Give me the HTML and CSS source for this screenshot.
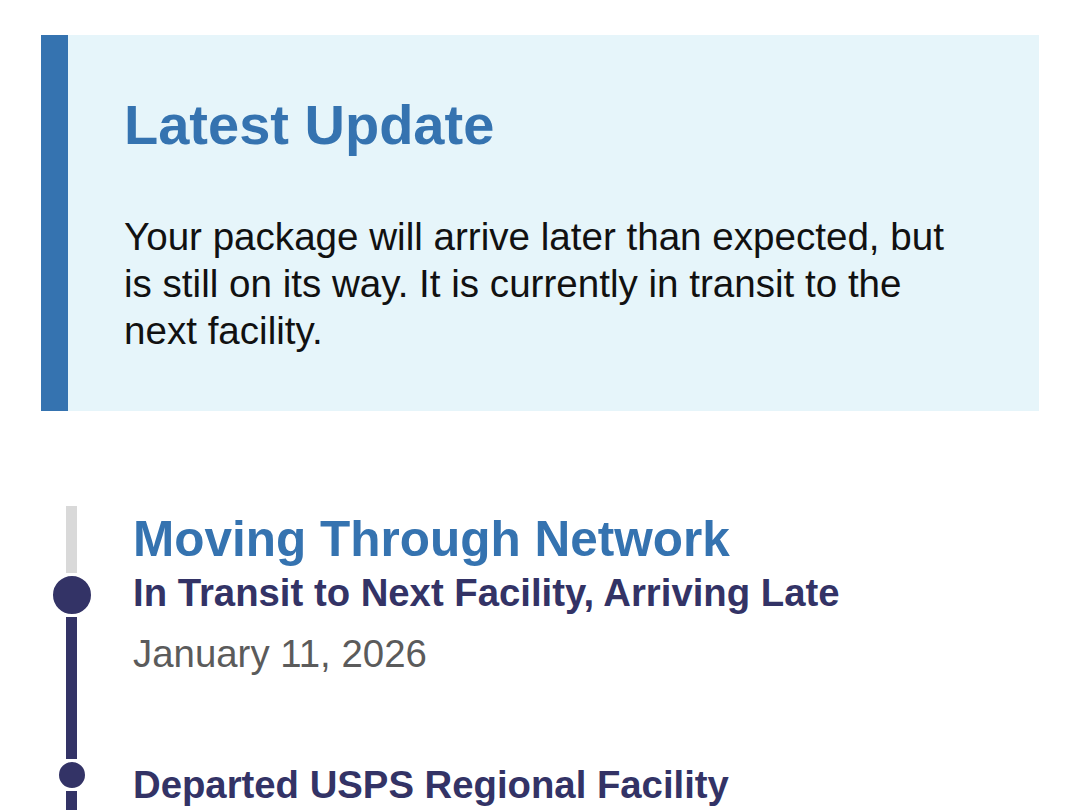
FILE: index.html
```html
<!DOCTYPE html>
<html lang="en">
<head>
<meta charset="utf-8">
<title>Tracking</title>
<link rel="stylesheet" href="styles.css">
</head>
<body>
<main class="page">
  <section class="update">
    <h2 class="update-title">Latest Update</h2>
    <p class="update-text">Your package will arrive later than expected, but is still on its way. It is currently in transit to the next facility.</p>
  </section>

  <ol class="timeline">
    <li class="event event-current">
      <div class="track">
        <span class="seg seg-top seg-future"></span>
        <span class="dot dot-big"></span>
        <span class="seg seg-rest"></span>
      </div>
      <div class="event-body">
        <h3 class="status">Moving Through Network</h3>
        <p class="event-title">In Transit to Next Facility, Arriving Late</p>
        <p class="event-date">January 11, 2026</p>
      </div>
    </li>
    <li class="event">
      <div class="track">
        <span class="seg seg-top-small"></span>
        <span class="dot dot-small"></span>
        <span class="seg seg-rest"></span>
      </div>
      <div class="event-body event-body-small">
        <p class="event-title">Departed USPS Regional Facility</p>
        <p class="event-date">January 10, 2026, 11:42 pm</p>
      </div>
    </li>
  </ol>
</main>
</body>
</html>
```
FILE: styles.css
```css
* { box-sizing: border-box; }

html, body {
  margin: 0;
  padding: 0;
  background: #ffffff;
}

body {
  font-family: "Liberation Sans", Arial, Helvetica, sans-serif;
  color: #111111;
}

.page {
  padding: 35px 41px 0;
}

.update {
  background: #e6f5fa;
  border-left: 27px solid #3573b0;
  padding: 58px 70px 57px 56px;
}

.update-title {
  margin: 0;
  font-size: 56px;
  line-height: 64px;
  font-weight: 700;
  color: #3573b0;
}

.update-text {
  margin: 56px 0 0;
  font-size: 38.6px;
  line-height: 47px;
  color: #111111;
}

.timeline {
  list-style: none;
  margin: 95px 0 0;
  padding: 0;
}

.event {
  display: flex;
  align-items: stretch;
}

.track {
  flex: 0 0 61px;
  display: flex;
  flex-direction: column;
  align-items: center;
}

.seg {
  width: 11px;
  background: #333366;
}

.seg-top {
  flex: 0 0 67px;
}

.seg-future {
  background: #d9d9d9;
}

.seg-top-small {
  flex: 0 0 38px;
}

.seg-rest {
  flex: 1 1 auto;
}

.dot {
  flex: 0 0 auto;
  border-radius: 50%;
  background: #333366;
  border: 3px solid #ffffff;
}

.dot-big {
  width: 44px;
  height: 44px;
}

.dot-small {
  width: 32px;
  height: 32px;
}

.event-body {
  margin-left: 31px;
  padding: 3px 0 45px;
}

.event-body-small {
  padding-top: 42px;
  padding-bottom: 60px;
}

.status {
  margin: 0;
  font-size: 49.5px;
  line-height: 60px;
  font-weight: 700;
  color: #3573b0;
}

.event-title {
  margin: 2px 0 0;
  font-size: 38.3px;
  line-height: 44px;
  font-weight: 700;
  color: #333366;
}

.event-body-small .event-title {
  margin-top: 0;
}

.event-date {
  margin: 17px 0 0;
  font-size: 38.4px;
  line-height: 44px;
  color: #5b5b5b;
}
```
